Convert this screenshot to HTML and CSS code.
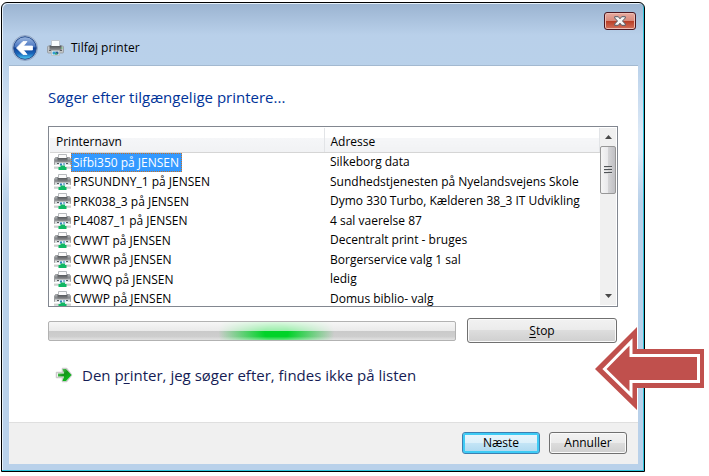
FILE: index.html
```html
<!DOCTYPE html>
<html lang="da">
<head>
<meta charset="utf-8">
<title>Tilføj printer</title>
<link rel="stylesheet" href="styles.css">
</head>
<body>
<svg class="defs" aria-hidden="true">
  <defs>
    <linearGradient id="metal" x1="0" y1="0" x2="0" y2="1">
      <stop offset="0" stop-color="#b4b7ba"/><stop offset=".4" stop-color="#85888b"/><stop offset="1" stop-color="#b9bbbd"/>
    </linearGradient>
    <linearGradient id="body" x1="0" y1="0" x2="0" y2="1">
      <stop offset="0" stop-color="#4f5255"/><stop offset=".6" stop-color="#77797b"/><stop offset="1" stop-color="#98999b"/>
    </linearGradient>
    <symbol id="printer" viewBox="0 0 17 16">
      <path d="M.5 7q0-1 1-1h14q1 0 1 1v5q0 1-1 1h-14q-1 0-1-1z" fill="#c3c6c8" stroke="#8b8f93" stroke-width=".7"/>
      <path d="M2.500 5.500h12v5h-12z" fill="url(#body)"/>
      <path d="M4.500 6V.5h8V6" fill="#fafcfd" stroke="#c0c7cf"/>
      <path d="M2 10h13v1H2z" fill="#5c6063"/>
      <path d="M14 7.500h1.500v1H14z" fill="#58c46a"/>
      <path d="M4.500 10.500h8v5h-8z" fill="#fff" stroke="#b6babd" stroke-width=".8"/>
      <path d="M5.500 11.500h3v3h-3z" fill="#2f9bcf"/>
      <path d="M8.500 11.500h3v3h-3z" fill="#2a5f8c"/>
      <path d="M8 13h2v1.500H8z" fill="#35a873"/>
    </symbol>
    <symbol id="netprinter" viewBox="0 0 17 16">
      <path d="M1.500 3.500h14l1 1.500v5.500H.5V5z" fill="url(#metal)" stroke="#85888b" stroke-width=".7"/>
      <path d="M3.500 3.500h10v5h-10z" fill="url(#body)"/>
      <path d="M4.500 4V.5h8V4" fill="#fafafa" stroke="#b7babd"/>
      <path d="M1 8.500h15v2.500H1z" fill="#dcdedf"/>
      <path d="M3 9h2v1H3zM12 9h2v1h-2z" fill="#55595c"/>
      <path d="M5 9h7v3H5z" fill="#e6f2fa"/>
      <path d="M6 9.500h2v2H6zM9 9.500h2v1H9z" fill="#347fb4"/>
      <path d="M0 13h17v2H0z" fill="#d7dad9"/>
      <path d="M0 13h17" stroke="#b5bab7" stroke-width=".6"/>
      <path d="M6.500 11.500h4.500v1.500h1.500v3H4.500v-3h2z" fill="#10b764"/>
    </symbol>
  </defs>
</svg>
<main class="window">
  <header class="titlebar">
    <button class="back" type="button" aria-label="Tilbage">
      <svg viewBox="0 0 26 26" width="26" height="26">
        <defs>
          <linearGradient id="orb" x1="0" y1="0" x2="0" y2="1">
            <stop offset="0" stop-color="#9db8e0"/><stop offset=".44" stop-color="#4c78c2"/><stop offset=".5" stop-color="#103f94"/><stop offset=".75" stop-color="#1a68bd"/><stop offset="1" stop-color="#4fd0f4"/>
          </linearGradient>
        </defs>
        <circle cx="13" cy="13" r="12.500" fill="#c9d8eb" stroke="#8095b8" stroke-width=".8"/>
        <circle cx="13" cy="13" r="11.300" fill="url(#orb)" stroke="#254c8d"/>
        <path d="M4.500 13l6.500-6.500h4L11.500 11H20.500v4H11.500l3.500 4.500h-4z" fill="#fff" stroke="#fff" stroke-width=".8"/>
      </svg>
    </button>
    <svg class="title-icon" width="17" height="16" aria-hidden="true"><use href="#printer"/></svg>
    <h1 class="title">Tilføj printer</h1>
    <button class="close" type="button" aria-label="Luk">
      <svg viewBox="0 0 12 10" width="12" height="10"><path d="M.7.700h3.600L6 2.800 7.700.700h3.600v1.300L8.500 5l2.800 3v1.300H7.700L6 7.200 4.300 9.300H.7V8l2.800-3L.7 2z" fill="#f5f5f5" stroke="#555c68"/></svg>
    </button>
  </header>
  <section class="client">
    <div class="content">
      <h2 class="heading">Søger efter tilgængelige printere...</h2>
      <div class="list">
        <table class="printers">
          <thead><tr><th class="name">Printernavn</th><th>Adresse</th></tr></thead>
          <tbody>
            <tr><td><span class="cell"><svg class="icon"><use href="#netprinter"/></svg><span class="label selected">Sifbi350 på JENSEN</span></span></td><td>Silkeborg data</td></tr>
            <tr><td><span class="cell"><svg class="icon"><use href="#netprinter"/></svg><span class="label">PRSUNDNY_1 på JENSEN</span></span></td><td>Sundhedstjenesten på Nyelandsvejens Skole</td></tr>
            <tr><td><span class="cell"><svg class="icon"><use href="#netprinter"/></svg><span class="label">PRK038_3 på JENSEN</span></span></td><td>Dymo 330 Turbo, Kælderen 38_3 IT Udvikling</td></tr>
            <tr><td><span class="cell"><svg class="icon"><use href="#netprinter"/></svg><span class="label">PL4087_1 på JENSEN</span></span></td><td>4 sal vaerelse 87</td></tr>
            <tr><td><span class="cell"><svg class="icon"><use href="#netprinter"/></svg><span class="label">CWWT på JENSEN</span></span></td><td>Decentralt print - bruges</td></tr>
            <tr><td><span class="cell"><svg class="icon"><use href="#netprinter"/></svg><span class="label">CWWR på JENSEN</span></span></td><td>Borgerservice valg 1 sal</td></tr>
            <tr><td><span class="cell"><svg class="icon"><use href="#netprinter"/></svg><span class="label">CWWQ på JENSEN</span></span></td><td>ledig</td></tr>
            <tr><td><span class="cell"><svg class="icon"><use href="#netprinter"/></svg><span class="label">CWWP på JENSEN</span></span></td><td>Domus biblio- valg</td></tr>
          </tbody>
        </table>
        <div class="scrollbar">
          <button class="scroll-step" type="button" aria-label="Rul op"><svg viewBox="0 0 7 4" width="7" height="4"><path d="M0 4L3.500 0 7 4z" fill="#484848"/></svg></button>
          <div class="thumb"><svg viewBox="0 0 8 8" width="8" height="8"><path d="M0 .5h8M0 3.500h8M0 6.500h8" stroke="#4f5357"/><path d="M0 1.500h8M0 4.500h8M0 7.500h8" stroke="#d8d8d8"/></svg></div>
          <button class="scroll-step down" type="button" aria-label="Rul ned"><svg viewBox="0 0 7 4" width="7" height="4"><path d="M0 0h7L3.500 4z" fill="#484848"/></svg></button>
        </div>
      </div>
      <div class="search">
        <div class="progress" role="progressbar" aria-label="Søger"></div>
        <button class="button stop" type="button"><u>S</u>top</button>
      </div>
      <a class="command" href="#">
        <svg viewBox="0 0 18 18" width="18" height="18" aria-hidden="true">
          <defs><linearGradient id="go" x1="0" y1="0" x2="1" y2="1"><stop offset="0" stop-color="#7be07c"/><stop offset=".45" stop-color="#14951b"/><stop offset="1" stop-color="#08d51c"/></linearGradient></defs>
          <path d="M1.500 6.500h6V2.500h4l5 6.500-5 6.500h-4v-4h-6z" fill="#fff" stroke="#ccc" stroke-width="1.500" stroke-linejoin="round"/>
          <path d="M3 7.500h6L7.500 3h3.500l5.500 6-5.500 6H7.500L9 10.500H3z" fill="url(#go)"/>
        </svg>
        <span>Den p<u>r</u>inter, jeg søger efter, findes ikke på listen</span>
      </a>
    </div>
    <footer class="actions">
      <button class="button primary" type="button">Næste</button>
      <button class="button" type="button">Annuller</button>
    </footer>
  </section>
  <svg class="pointer" viewBox="0 0 110 84" width="110" height="84" aria-hidden="true">
    <path d="M0 42L42 0v22h67v39H42v22z" fill="#c0504d"/>
    <path d="M9.500 42L36 15v13.500h67.500v26H36v13.500z" fill="#c0504d" stroke="#fff" stroke-width="3"/>
  </svg>
</main>
</body>
</html>
```
FILE: styles.css
```css
* { box-sizing: border-box; }

body {
  margin: 0;
  padding: 2px 64px 3px 1px;
  background: #fff;
  color: #000;
  font: 12px/16px "Open Sans", "Noto Sans", sans-serif;
}

.defs { position: absolute; width: 0; height: 0; }

button { font: inherit; color: inherit; padding: 0; }

.window {
  position: relative;
  padding: 0 6px 7px 7px;
  border: 1px solid #000;
  border-radius: 6px 6px 0 0;
  background: linear-gradient(#9ab3d0 0, #b9d0ea 32px, #b9d1ea 60px, #dbe8f6 130px, #dbe8f6 150px, #b9d1ea 200px);
  box-shadow: inset -1px -1px #2fc4dc, inset 1px 1px #e6f1fa;
}

.titlebar {
  display: flex;
  align-items: center;
  height: 62px;
  padding: 28px 2px 0 3px;
}

.back { width: 26px; height: 26px; border: 0; background: none; }
.back svg { display: block; }
.title-icon { margin-left: 9px; }
.title { margin: 0 0 0 7px; font-size: 12px; font-weight: 400; }

.close {
  display: flex;
  align-items: center;
  justify-content: center;
  align-self: flex-start;
  width: 32px;
  height: 18px;
  margin-top: -19px;
  margin-left: auto;
  border: 1px solid #4b1620;
  border-radius: 3px;
  background: linear-gradient(#e7aaa0 0, #d98a7c 48%, #b83d25 50%, #d3715c 100%);
  box-shadow: inset 0 0 0 1px #edbdb4;
}

.client { border-top: 1px solid #a3b9d0; background: #fff; }

.content { display: flex; flex-direction: column; padding: 19px 20px 35px 39px; }

.heading { margin: 0 0 17px; color: #039; font-size: 15px; line-height: 24px; font-weight: 400; }

.list {
  display: flex;
  height: 181px;
  padding: 1px;
  border: 1px solid #828790;
  overflow: hidden;
}

.printers { flex: 1; align-self: flex-start; border-collapse: collapse; table-layout: fixed; }
.printers th {
  height: 24px;
  padding: 4px 6px 0;
  border-right: 1px solid #e2e4e7;
  border-bottom: 1px solid #d5d5d5;
  background: linear-gradient(#fff 0, #fff 40%, #f5f6f8 42%, #f1f2f4 100%);
  font-weight: 400;
  text-align: left;
}
.printers .name { width: 274px; }
.printers td { height: 19px; padding: 0 6px; white-space: nowrap; }
.printers tr:nth-child(odd) td { height: 20px; }
.printers td:first-child { padding: 0 4px; }
.cell { display: flex; align-items: center; }
.icon { width: 17px; height: 16px; flex: none; }
.label { padding: 0 2px; line-height: 19px; }
.selected { padding-right: 3px; outline: 1px dotted #c87127; outline-offset: -1px; background: #39f; color: #fff; }

.scrollbar {
  display: flex;
  flex-direction: column;
  flex: none;
  width: 16px;
  background: #f0f0f0;
}
.scroll-step { display: flex; align-items: center; justify-content: center; height: 18px; border: 0; background: none; }
.down { margin-top: auto; }
.thumb {
  display: flex;
  align-items: center;
  justify-content: center;
  height: 48px;
  border: 1px solid #979797;
  border-radius: 2px;
  background: linear-gradient(90deg, #f5f5f5 0, #e9e9eb 48%, #d4d4d6 52%, #c0c0c4 100%);
}

.search { display: flex; align-items: center; gap: 11px; margin: 11px 1px 0 0; }

.progress {
  flex: 1;
  height: 20px;
  border: 1px solid #b2b2b2;
  border-radius: 2px;
  background:
    linear-gradient(rgba(255,255,255,.85) 0, rgba(255,255,255,.6) 50%, transparent 52%, transparent 80%, rgba(255,255,255,.4) 100%),
    radial-gradient(ellipse 58px 40px at 56% 60%, #00d328 0, #00d328 20%, rgba(0,211,40,0) 100%),
    linear-gradient(#c4c4c4, #d0d0d0);
}

.button {
  width: 78px;
  height: 22px;
  border: 1px solid #707070;
  border-radius: 3px;
  background: linear-gradient(#f2f2f2 0, #ebebeb 48%, #dddddd 50%, #cfcfcf 100%);
  box-shadow: inset 0 0 0 1px #fafafa;
}
.stop { width: 150px; height: 25px; }
.primary {
  border-color: #3c7fb1;
  background: linear-gradient(#ebf6fc 0, #dcf0fa 48%, #c4e5f6 50%, #add8ef 100%);
  box-shadow: inset 0 0 0 2px #3ecbf5;
}

.command {
  display: flex;
  align-items: center;
  gap: 9px;
  margin: 20px 0 0 7px;
  color: #151c55;
  font-size: 15px;
  line-height: 24px;
  text-decoration: none;
  white-space: nowrap;
}
u { text-underline-offset: 2px; text-decoration-thickness: 1px; }

.actions {
  display: flex;
  justify-content: flex-end;
  gap: 9px;
  padding: 9px 11px 10px;
  border-top: 1px solid #dfdfdf;
  background: #f0f0f0;
}

.pointer { position: absolute; top: 324px; right: -61px; }
```
